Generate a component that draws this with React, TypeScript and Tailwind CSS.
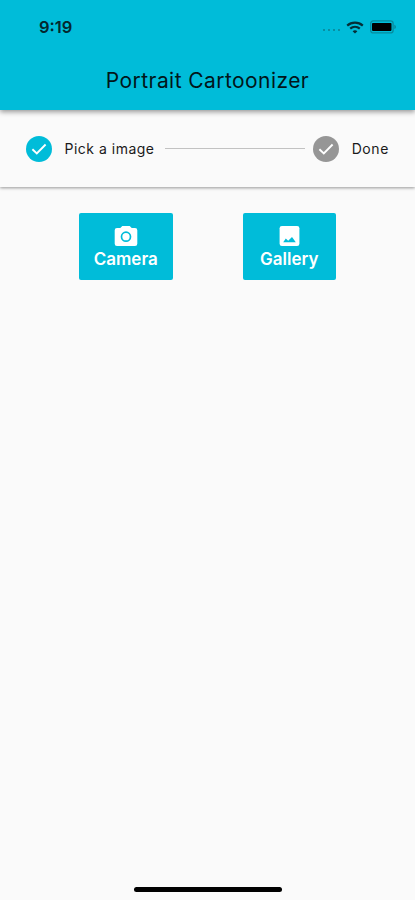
import React from "react";

const CameraIcon = () => (
  <svg width="26" height="26" viewBox="0 0 26 26" fill="none">
    <path
      d="M9.3 3H16.7L18.7 5H22Q24.3 5 24.3 7.3V20.7Q24.3 23 22 23H4Q1.7 23 1.7 20.7V7.3Q1.7 5 4 5H7.3Z"
      fill="currentColor"
    />
    <circle cx="13" cy="13.7" r="4.5" stroke="#00bcd9" strokeWidth="1.7" />
  </svg>
);

const GalleryIcon = () => (
  <svg width="26" height="26" viewBox="0 0 26 26">
    <rect x="3.6" y="3" width="19.8" height="20" rx="2.3" fill="currentColor" />
    <path d="M7.2 19.2L9.8 15.6L12.2 17.8L16 14L19.8 19.2Z" fill="#00bcd9" />
  </svg>
);

const CheckIcon = () => (
  <svg width="26" height="26" viewBox="0 0 26 26" fill="none" stroke="white" strokeWidth="1.9">
    <path d="M6.4 13.2L10.8 17.4L19.6 8.5" />
  </svg>
);

const actions = [
  { name: "Camera", icon: CameraIcon },
  { name: "Gallery", icon: GalleryIcon },
];

const StatusBar = () => {
  return (
    <div className="flex h-[54px] items-center justify-between pl-[39px] pr-[18px]">
      <p className="text-[16.5px] font-semibold leading-5 text-[#04272e]">9:19</p>
      <div className="flex items-center">
        <div className="mr-[6px] mt-[6px] flex gap-[3px]">
          {[0, 1, 2, 3].map((dot) => (
            <span key={dot} className="h-[2px] w-[2px] bg-[#078fa2]" />
          ))}
        </div>
        <svg width="18" height="13" viewBox="0 0 18 13" fill="none" stroke="#052e36" strokeWidth="2.2">
          <path d="M1.2 4.6C5.6 0.6 12.4 0.6 16.8 4.6" />
          <path d="M4.2 7.7C7 5.3 11 5.3 13.8 7.7" />
          <path d="M9 12.6L6.6 10.2C8 9 10 9 11.4 10.2Z" fill="#052e36" stroke="none" />
        </svg>
        <svg className="ml-[6px]" width="27" height="14" viewBox="0 0 27 14">
          <rect x="0.7" y="0.9" width="22.4" height="12" rx="2.5" fill="none" stroke="#078b9d" strokeWidth="1.3" />
          <rect x="2" y="2.9" width="19.5" height="8" rx="0.8" fill="#000" />
          <path d="M24.3 4.7C26.5 5.4 26.5 8.4 24.3 9.1Z" fill="#078b9d" />
        </svg>
      </div>
    </div>
  );
};

const App = () => {
  return (
    <div className="flex h-[900px] w-full flex-col bg-[#fafafa] font-['Inter',sans-serif]">
      <header className="z-10 h-[110px] bg-[#00bcd9] shadow-[0_2px_5px_rgba(0,0,0,0.4)]">
        <StatusBar />
        <h1 className="pt-[13px] text-center text-[21px] leading-7 tracking-[0.43px] text-[#02161a]">
          Portrait Cartoonizer
        </h1>
      </header>

      <div className="flex h-[77px] items-center pl-[26px] pr-[26px] shadow-[0_1px_3px_rgba(0,0,0,0.4)]">
        <div className="rounded-full bg-[#00bcd9]">
          <CheckIcon />
        </div>
        <p className="ml-[12.5px] w-[100px] whitespace-nowrap text-[14px] tracking-[0.5px] text-[#1a1a1a]">
          Pick a image
        </p>
        <div className="h-px flex-1 bg-[#c2c2c2]" />
        <div className="ml-[8.5px] rounded-full bg-[#969696]">
          <CheckIcon />
        </div>
        <p className="ml-[12.5px] text-[14px] tracking-[0.6px] text-[#1a1a1a]">Done</p>
      </div>

      <main className="flex flex-1 justify-center gap-[70px] pt-[26px]">
        {actions.map((action) => (
          <button
            key={action.name}
            className="flex h-[67px] w-[93.5px] flex-col items-center rounded-[2px] bg-[#00bcd9] pt-[10px] text-white"
          >
            <action.icon />
            <span className="text-[17px] font-semibold leading-5">{action.name}</span>
          </button>
        ))}
      </main>

      <div className="mx-auto mb-[8px] h-[5px] w-[148px] rounded-full bg-black" />
    </div>
  );
};

export default App;
